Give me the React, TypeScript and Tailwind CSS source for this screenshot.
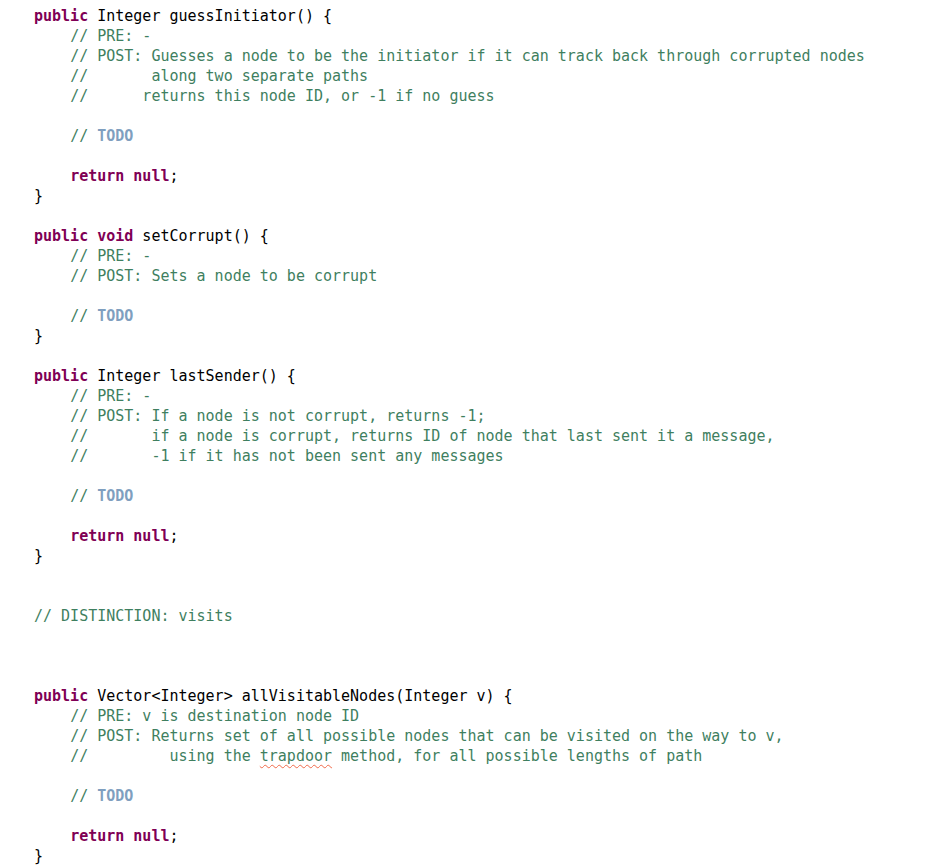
type Tok = { t: string; k?: "kw" | "cm" | "todo" | "typo" };

const tokenClass: Record<string, string> = {
  kw: "font-bold text-[#7f0055]",
  cm: "text-[#3f7f5f]",
  todo: "font-bold text-[#7f9fbf]",
  typo: "text-[#3f7f5f] underline decoration-wavy decoration-[#f06a4a] decoration-1 underline-offset-[3px]",
};

const todo: Tok[] = [{ t: "    " }, { t: "// ", k: "cm" }, { t: "TODO", k: "todo" }];
const retNull: Tok[] = [{ t: "    " }, { t: "return", k: "kw" }, { t: " " }, { t: "null", k: "kw" }, { t: ";" }];
const close: Tok[] = [{ t: "}" }];
const blank: Tok[] = [];
const cm = (s: string): Tok[] => [{ t: "    " }, { t: s, k: "cm" }];

const lines: Tok[][] = [
  [{ t: "public", k: "kw" }, { t: " Integer guessInitiator() {" }],
  cm("// PRE: -"),
  cm("// POST: Guesses a node to be the initiator if it can track back through corrupted nodes"),
  cm("//       along two separate paths"),
  cm("//      returns this node ID, or -1 if no guess"),
  blank,
  todo,
  blank,
  retNull,
  close,
  blank,
  [{ t: "public", k: "kw" }, { t: " " }, { t: "void", k: "kw" }, { t: " setCorrupt() {" }],
  cm("// PRE: -"),
  cm("// POST: Sets a node to be corrupt"),
  blank,
  todo,
  close,
  blank,
  [{ t: "public", k: "kw" }, { t: " Integer lastSender() {" }],
  cm("// PRE: -"),
  cm("// POST: If a node is not corrupt, returns -1;"),
  cm("//       if a node is corrupt, returns ID of node that last sent it a message,"),
  cm("//       -1 if it has not been sent any messages"),
  blank,
  todo,
  blank,
  retNull,
  close,
  blank,
  blank,
  [{ t: "// DISTINCTION: visits", k: "cm" }],
  blank,
  blank,
  blank,
  [{ t: "public", k: "kw" }, { t: " Vector<Integer> allVisitableNodes(Integer v) {" }],
  cm("// PRE: v is destination node ID"),
  cm("// POST: Returns set of all possible nodes that can be visited on the way to v,"),
  [
    { t: "    " },
    { t: "//         using the ", k: "cm" },
    { t: "trapdoor", k: "typo" },
    { t: " method, for all possible lengths of path", k: "cm" },
  ],
  blank,
  todo,
  blank,
  retNull,
  close,
];

export default function App() {
  return (
    <div className="min-h-screen bg-white pt-[6px] pl-[34px] font-['DejaVu_Sans_Mono',monospace] text-[15px] text-black">
      {lines.map((line, i) => (
        <div key={i} className="h-5 leading-5 whitespace-pre">
          {line.map((tok, j) => (
            <span key={j} className={tok.k ? tokenClass[tok.k] : undefined}>
              {tok.t}
            </span>
          ))}
        </div>
      ))}
    </div>
  );
}
